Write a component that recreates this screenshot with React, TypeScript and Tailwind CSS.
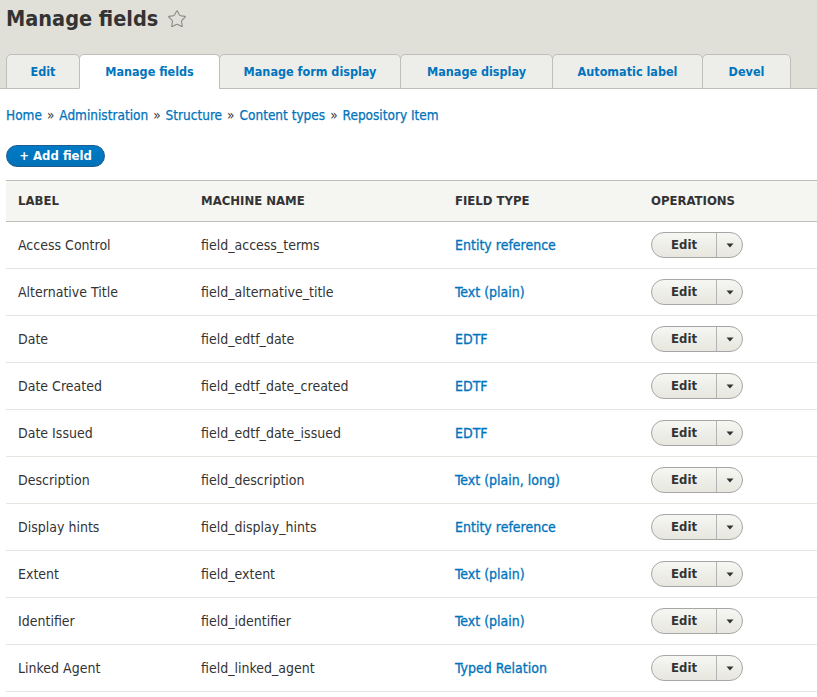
import { Star } from "lucide-react";

type Field = { label: string; machine: string; type: string };

const fields: Field[] = [
  { label: "Access Control", machine: "field_access_terms", type: "Entity reference" },
  { label: "Alternative Title", machine: "field_alternative_title", type: "Text (plain)" },
  { label: "Date", machine: "field_edtf_date", type: "EDTF" },
  { label: "Date Created", machine: "field_edtf_date_created", type: "EDTF" },
  { label: "Date Issued", machine: "field_edtf_date_issued", type: "EDTF" },
  { label: "Description", machine: "field_description", type: "Text (plain, long)" },
  { label: "Display hints", machine: "field_display_hints", type: "Entity reference" },
  { label: "Extent", machine: "field_extent", type: "Text (plain)" },
  { label: "Identifier", machine: "field_identifier", type: "Text (plain)" },
  { label: "Linked Agent", machine: "field_linked_agent", type: "Typed Relation" },
];

const tabs = [
  { name: "Edit", w: "w-[74px]" },
  { name: "Manage fields", w: "w-[141px]", active: true },
  { name: "Manage form display", w: "w-[182px]" },
  { name: "Manage display", w: "w-[153px]" },
  { name: "Automatic label", w: "w-[151px]" },
  { name: "Devel", w: "w-[89px]" },
];

const crumbs = ["Home", "Administration", "Structure", "Content types", "Repository Item"];

function EditButton() {
  return (
    <div className="flex h-[26px] w-[92px] items-stretch rounded-full border border-[#a6a6a6] bg-gradient-to-b from-[#f6f6f3] to-[#e7e7df] text-[13px] font-bold text-[#333]">
      <span className="flex flex-1 items-center justify-center">Edit</span>
      <span className="flex w-[26px] items-center justify-center border-l border-[#b3b3b3]">
        <svg width="8" height="5" viewBox="0 0 8 5">
          <path d="M0.5 0.5 L7.5 0.5 L4 4.5 Z" fill="#333" />
        </svg>
      </span>
    </div>
  );
}

export default function App() {
  return (
    <div className="min-h-[697px] bg-white font-['DejaVu_Sans_Condensed','DejaVu_Sans',sans-serif] text-[#333]">
      <header className="border-b border-[#bfbfba] bg-[#e0e0d8] px-[6px]">
        <div className="flex h-[53px] items-start pt-[2px]">
          <h1 className="text-[21.5px] font-bold leading-[34px] text-[#333]">Manage fields</h1>
          <Star className="ml-[9px] mt-[7px] h-[20px] w-[20px] text-[#8a8a85]" strokeWidth={1.3} />
        </div>
        <nav className="flex h-[35px] items-end">
          {tabs.map((t) => (
            <div
              key={t.name}
              className={`${t.w} -mb-px -ml-px flex h-[35px] items-center justify-center rounded-t-[5px] border border-[#bfbfba] pt-[1px] text-[12.5px] font-bold text-[#0074bd] first:ml-0 ${
                t.active ? "border-b-white bg-white" : "bg-[#ededea]"
              }`}
            >
              {t.name}
            </div>
          ))}
        </nav>
      </header>

      <div className="px-[6px]">
        <div className="flex h-[52px] items-center text-[13.5px] text-[#0074bd] [-webkit-text-stroke:0.25px_#0074bd]">
          {crumbs.map((c, i) => (
            <span key={c} className="flex items-center">
              {i > 0 && <span className="mx-[5px] text-[#333] [-webkit-text-stroke:0]">»</span>}
              {c}
            </span>
          ))}
        </div>

        <div className="mt-[4px] flex h-[22px] w-[99px] items-center justify-center rounded-full border border-[#1e5c90] bg-gradient-to-b from-[#007bc6] to-[#0071b8] text-[13px] font-bold text-white">
          + Add field
        </div>

        <table className="mt-[13px] w-[811px] table-fixed border-collapse text-left text-[14px]">
          <colgroup>
            <col className="w-[183px]" />
            <col className="w-[254px]" />
            <col className="w-[196px]" />
            <col />
          </colgroup>
          <thead>
            <tr className="h-[41px] border-y border-[#bfbfba] bg-[#f5f5f2] text-[13px] font-bold uppercase">
              <th className="px-[12px] font-bold">Label</th>
              <th className="px-[12px] font-bold">Machine name</th>
              <th className="px-[12px] font-bold">Field type</th>
              <th className="px-[12px] font-bold">Operations</th>
            </tr>
          </thead>
          <tbody>
            {fields.map((f) => (
              <tr key={f.machine} className="h-[47px] border-b border-[#e6e4df]">
                <td className="px-[12px]">{f.label}</td>
                <td className="px-[12px]">{f.machine}</td>
                <td className="px-[12px] text-[#0074bd] [-webkit-text-stroke:0.3px_#0074bd]">{f.type}</td>
                <td className="px-[12px]">
                  <EditButton />
                </td>
              </tr>
            ))}
          </tbody>
        </table>
      </div>
    </div>
  );
}
